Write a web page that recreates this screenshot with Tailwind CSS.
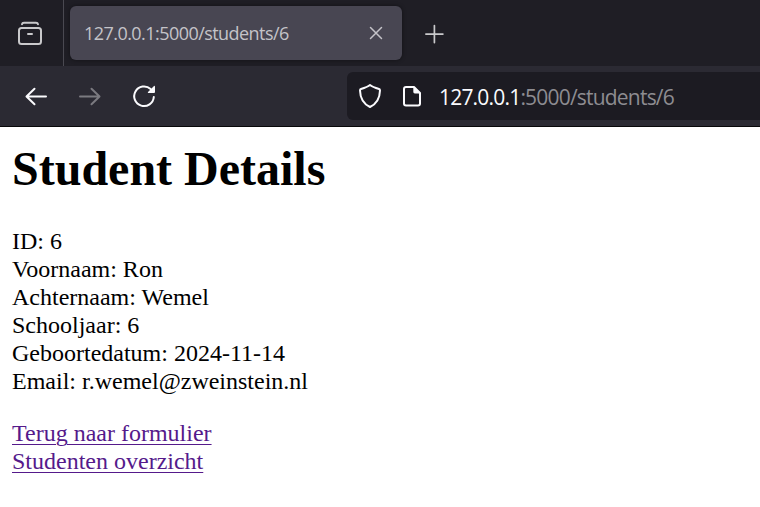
<!DOCTYPE html>
<html lang="nl">
<head>
<meta charset="utf-8">
<title>Student Details</title>
<script src="https://cdn.jsdelivr.net/npm/@tailwindcss/browser@4"></script>
</head>
<body class="w-[760px] h-[507px] overflow-hidden bg-white">
<header class="font-['Open_Sans','Noto_Sans',sans-serif]">
  <div class="flex h-[66px] bg-[#1f1e25]">
    <div class="w-16 shrink-0 border-r border-[#4a4951] flex">
      <svg class="mt-5 ml-4 w-7 h-7" viewBox="16 20 28 28" fill="none" stroke="#c9c9cb" stroke-width="2" stroke-linecap="round">
        <path d="M22 24.3Q22.3 22.8 24 22.8H36Q37.7 22.8 38 24.3"/>
        <rect x="19" y="28" width="22" height="16" rx="2.5"/>
        <path d="M28 34H32"/>
      </svg>
    </div>
    <div class="mt-1.5 ml-1.5 w-[332px] h-[54px] rounded-md bg-[#484652] shadow-[0_0_4px_rgba(0,0,0,0.45)] flex items-center justify-between pl-3.5 pr-[18px]">
      <span class="text-[18px] leading-6 tracking-[-0.55px] text-[#c4c3c8] whitespace-nowrap">127.0.0.1:5000/students/6</span>
      <svg class="w-4 h-4" viewBox="0 0 16 16" fill="none" stroke="#c4c3c8" stroke-width="1.5" stroke-linecap="round"><path d="M2.5 2.5L13.5 13.5M13.5 2.5L2.5 13.5"/></svg>
    </div>
    <svg class="mt-6 ml-[22px] w-5 h-5" viewBox="0 0 20 20" fill="none" stroke="#c9c9cb" stroke-width="1.7" stroke-linecap="round"><path d="M10.4 1.6V18.6M1.9 10.1H18.9"/></svg>
  </div>
  <div class="flex h-[61px] bg-[#2b2a33] border-b border-[#08080a]">
    <svg class="mt-4 ml-5 w-[140px] h-7 shrink-0" viewBox="20 82 140 28" fill="none" stroke="#fbfbfe" stroke-width="2" stroke-linecap="round" stroke-linejoin="round">
      <path d="M46 96.5H27M34.5 88.8L26.5 96.5L34.5 104.2"/>
      <path stroke="#7b7a80" d="M80 96.5H99M91.5 88.8L99.5 96.5L91.5 104.2"/>
      <path d="M153.8 97A9.8 9.8 0 1 1 150.6 89"/>
      <path fill="#fbfbfe" stroke="none" d="M155 86.4V92Q155 93 154 93H148.3Q147.4 92.8 148 92L154 86Q154.8 85.5 155 86.4Z"/>
    </svg>
    <div class="ml-[187px] mt-1.5 grow h-12 rounded-l-md bg-[#1c1b22] flex items-center">
      <svg class="ml-[9px] w-7 h-7 shrink-0" viewBox="356 82 28 28" fill="none" stroke="#fbfbfe" stroke-width="2" stroke-linejoin="round"><path d="M370 85Q372.5 87 379 89Q380 89.3 380 90.4C379.8 99 376 104 370 107C364 104 360.2 99 360 90.4Q360 89.3 361 89Q367.5 87 370 85Z"/></svg>
      <svg class="ml-4 w-6 h-7 shrink-0" viewBox="400 82 24 28" fill="none" stroke="#fbfbfe" stroke-width="2" stroke-linejoin="round"><path d="M406 87H414L420 93V103.5Q420 105.5 418 105.5H406Q404 105.5 404 103.5V89Q404 87 406 87Z"/><path fill="#fbfbfe" stroke="none" d="M413.3 86.4L420.8 93.4H414.8Q413.3 93.4 413.3 92Z"/></svg>
      <span class="ml-[15px] pt-0.5 text-[21px] leading-7 tracking-[-0.8px] whitespace-nowrap text-[#8d8c91]"><span class="text-[#fbfbfe]">127.0.0.1</span>:5000/students/6</span>
    </div>
  </div>
</header>
<main class="px-3 pt-[15px] font-['Liberation_Serif',serif] text-black text-2xl leading-7">
  <h1 class="text-5xl leading-[54px] font-bold">Student Details</h1>
  <div class="mt-[31px]">
    <p>ID: 6</p>
    <p>Voornaam: Ron</p>
    <p>Achternaam: Wemel</p>
    <p>Schooljaar: 6</p>
    <p>Geboortedatum: 2024-11-14</p>
    <p>Email: r.wemel@zweinstein.nl</p>
  </div>
  <nav class="mt-6 text-[#551a8b] flex flex-col items-start">
    <a class="underline decoration-1 underline-offset-[3px]" href="#">Terug naar formulier</a>
    <a class="underline decoration-1 underline-offset-[3px]" href="#">Studenten overzicht</a>
  </nav>
</main>
</body>
</html>
